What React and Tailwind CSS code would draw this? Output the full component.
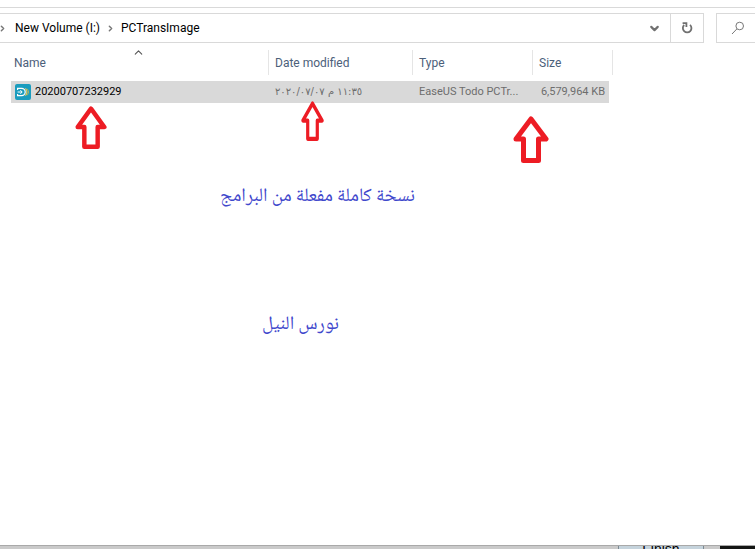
import { ChevronDown, ChevronRight, ChevronUp } from 'lucide-react'

const files = [
  {
    name: '20200707232929',
    modified: '١١:٣٥ م ٢٠٢٠/٠٧/٠٧',
    type: 'EaseUS Todo PCTr...',
    size: '6,579,964 KB',
  },
]

/* ── Icons ─────────────────────────────────────────────────────────────────── */
const RefreshIcon = () => (
  <svg viewBox="0 0 12 12" className="h-3 w-3" fill="none" stroke="#707070" strokeWidth="1.8">
    <path d="M9 2.9A4.3 4.3 0 1 1 3.2 3" />
    <path d="M1.6 1.2H5.4V5" />
  </svg>
)

const SearchIcon = () => (
  <svg viewBox="0 0 14 14" className="h-3.5 w-3.5" fill="none" stroke="#777" strokeWidth="1">
    <circle cx="8.7" cy="5" r="3.8" />
    <path d="M5.8 8L1 13" />
  </svg>
)

const FileIcon = () => (
  <svg viewBox="0 0 16 16" className="h-4 w-4 shrink-0" fill="none">
    <rect width="16" height="16" rx="2" fill="#1a9cbe" />
    <path d="M2.6 6V4.4H6.600A3.6 3.6 0 0 1 6.600 11.6H2.6V10" stroke="#fff" strokeWidth="1.2" />
    <path d="M2.6 8H7M5.4 6.2L7.2 8L5.4 9.8" stroke="#fff" strokeWidth="1" />
    <path d="M10.4 4.4Q13.4 8 10.4 11.6" stroke="#e8c65a" strokeWidth="1.2" />
    <path d="M12.4 4.8Q15 8 12.4 11.2" stroke="#a5b36a" strokeWidth="1" />
  </svg>
)

const Arrow = ({ className }) => (
  <svg viewBox="0 0 36 47" preserveAspectRatio="none" className={`absolute ${className}`}>
    <path d="M18 3L33 23H25.500V44.500H10.500V23H3Z" fill="#fff" stroke="#ed1c24" strokeWidth="5" strokeLinejoin="round" />
  </svg>
)

/* ── Address bar ───────────────────────────────────────────────────────────── */
const AddressBar = () => (
  <div className="mt-[5px] flex h-[30px] gap-3">
    <div className="flex flex-1 border border-l-0 border-[#d9d9d9]">
      <nav className="flex flex-1 items-center text-xs text-black">
        <ChevronRight size={9} strokeWidth={4} className="-ml-0.5 text-[#777]" />
        <a href="#volume" className="ml-2">New Volume (I:)</a>
        <ChevronRight size={9} strokeWidth={4} className="mx-1.5 text-[#777]" />
        <a href="#folder">PCTransImage</a>
      </nav>
      <button type="button" aria-label="Previous locations" className="flex w-8 items-center justify-center text-[#707070]">
        <ChevronDown size={13} strokeWidth={4} />
      </button>
      <button type="button" aria-label="Refresh" className="flex w-[33px] items-center justify-center border-l border-[#d9d9d9]">
        <RefreshIcon />
      </button>
    </div>
    <button type="button" aria-label="Search" className="flex w-[39px] items-center border border-r-0 border-[#d9d9d9] pl-3.5">
      <SearchIcon />
    </button>
  </div>
)

/* ── File list ─────────────────────────────────────────────────────────────── */
const FileTable = () => (
  <table className="ml-[11px] mt-[7px] w-[602px] table-fixed border-collapse text-left text-xs">
    <colgroup>
      <col className="w-[258px]" />
      <col className="w-[144px]" />
      <col className="w-[120px]" />
      <col className="w-[80px]" />
    </colgroup>
    <thead className="text-[#4c607a]">
      <tr>
        <th className="p-0 font-normal">
          <button type="button" className="relative block h-[25px] w-full border-r border-[#e5e5e5] pl-[3px] text-left">
            Name
            <ChevronUp size={13} strokeWidth={2} className="absolute left-[121px] -top-1 text-[#555]" />
          </button>
        </th>
        {['Date modified', 'Type', 'Size'].map((label) => (
          <th key={label} className="p-0 font-normal">
            <button type="button" className="block h-[25px] w-full border-r border-[#e5e5e5] pl-1.5 text-left">{label}</button>
          </th>
        ))}
      </tr>
    </thead>
    <tbody className="whitespace-nowrap text-[11px] text-[#6d6d6d]">
      {files.map((file) => (
        <tr key={file.name}>
          <td className="p-0 pt-1.5">
            <div className="flex h-[22px] items-center gap-1 bg-[#d9d9d9] pl-1 text-black">
              <FileIcon />
              {file.name}
            </div>
          </td>
          <td className="p-0 pt-1.5">
            <div className="flex h-[22px] items-center bg-[#d9d9d9] pl-1.5">
              <span dir="rtl" className="font-['DejaVu_Sans',sans-serif] text-[10px]">{file.modified}</span>
            </div>
          </td>
          <td className="p-0 pt-1.5">
            <div className="h-[22px] bg-[#d9d9d9] pl-1.5 leading-[22px]">{file.type}</div>
          </td>
          <td className="p-0 pt-1.5">
            <div className="mr-1 h-[22px] bg-[#d9d9d9] pr-1 text-right leading-[22px]">{file.size}</div>
          </td>
        </tr>
      ))}
    </tbody>
  </table>
)

/* ── Main component ────────────────────────────────────────────────────────── */
function App() {
  return (
    <div className="relative flex h-screen flex-col overflow-hidden bg-white font-[Roboto,sans-serif]">
      <div className="h-2 shrink-0 border-b border-[#d9d9d9]" />
      <AddressBar />
      <FileTable />
      <Arrow className="left-[75px] top-[106px] h-[43px] w-8" />
      <Arrow className="left-[301px] top-[101px] h-10 w-[23px]" />
      <Arrow className="left-[513px] top-[116px] h-[47px] w-9" />

      <main className="flex-1 pt-20 font-['Noto_Naskh_Arabic','Noto_Sans_Arabic',serif] text-[19px] leading-7 text-[#3f48cc]">
        <p lang="ar" className="pl-[220px]">نسخة كاملة مفعلة من البرامج</p>
        <p lang="ar" className="pl-[262px] pt-[100px]">نورس النيل</p>
      </main>

      {/* Sliver of the window behind */}
      <footer className="flex h-1 shrink-0 overflow-hidden border-t border-[#a9a9a9] bg-[#cacaca]">
        <button type="button" className="-mt-px ml-auto flex h-5 w-[86px] items-start justify-center border-x border-[#7c8a93] bg-[#c5d3dc] font-['Liberation_Sans',sans-serif] text-sm leading-2 text-black">Finish</button>
        <div className="ml-4 w-[35px] bg-[#141614]" />
      </footer>
    </div>
  )
}

export default App
